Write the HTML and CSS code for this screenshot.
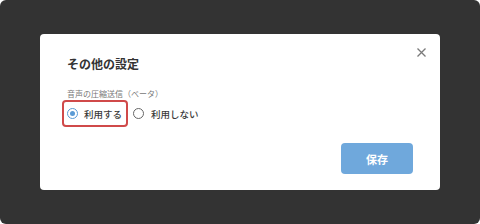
FILE: index.html
```html
<!DOCTYPE html>
<html lang="ja">
<head>
  <meta charset="UTF-8" />
  <meta name="viewport" content="width=device-width, initial-scale=1.0"/>
  <title>その他の設定</title>
  <link rel="stylesheet" href="styles.css">
</head>
<body>

  <div class="backdrop">
    <div class="dialog">
      <button class="close" aria-label="閉じる">
        <svg width="9" height="9" viewBox="0 0 9 9">
          <path d="M0.5 0.5 L8.5 8.5 M8.5 0.5 L0.5 8.5" stroke="#7a7a7a" stroke-width="1.3" fill="none"/>
        </svg>
      </button>

      <h2 class="title">その他の設定</h2>

      <div class="label">音声の圧縮送信（ベータ）</div>

      <div class="options">
        <label class="option selected">
          <span class="radio checked"></span>
          <span>利用する</span>
        </label>
        <label class="option">
          <span class="radio"></span>
          <span>利用しない</span>
        </label>
      </div>

      <div class="actions">
        <button class="save">保存</button>
      </div>
    </div>
  </div>

</body>
</html>
```

FILE: styles.css
```css
* {
  box-sizing: border-box;
  margin: 0;
  padding: 0;
  font-family: 'Noto Sans CJK JP', 'Noto Sans', sans-serif;
}

body {
  background: #fff;
}

.backdrop {
  width: 480px;
  height: 224px;
  background: #333333;
  border-radius: 6px;
  padding: 34px 40px;
  display: flex;
}

.dialog {
  flex: 1;
  position: relative;
  background: #fff;
  border-radius: 4px;
  padding: 22px 27px 16px 22px;
}

.close {
  position: absolute;
  top: 14px;
  right: 14px;
  width: 9px;
  height: 9px;
  border: none;
  background: none;
  display: flex;
  cursor: pointer;
}

.title {
  font-size: 12px;
  line-height: 16px;
  font-weight: bold;
  color: #333;
  padding-left: 5px;
}

.label {
  margin-top: 17px;
  font-size: 8px;
  line-height: 10px;
  color: #777;
  padding-left: 5px;
}

.options {
  margin-top: 1px;
  display: flex;
  align-items: center;
  gap: 5px;
}

.option {
  display: flex;
  align-items: center;
  gap: 6px;
  height: 27px;
  font-size: 9.5px;
  font-weight: 500;
  color: #3a3a3a;
  cursor: pointer;
}

.option.selected {
  border: 2px solid #d04a4a;
  border-radius: 4px;
  padding: 0 4px 0 3px;
}

.option:not(.selected) {
  gap: 7px;
}

.radio {
  width: 11px;
  height: 11px;
  border-radius: 50%;
  border: 1px solid #666;
  display: flex;
  align-items: center;
  justify-content: center;
}

.radio.checked {
  border-color: #5b9bd5;
}

.radio.checked::after {
  content: "";
  width: 5px;
  height: 5px;
  border-radius: 50%;
  background: #5b9bd5;
}

.actions {
  margin-top: 16px;
  display: flex;
  justify-content: flex-end;
}

.save {
  width: 72px;
  height: 31px;
  border: none;
  border-radius: 4px;
  background: #6fa8dc;
  color: #fff;
  font-size: 11px;
  font-weight: bold;
  cursor: pointer;
}
```
